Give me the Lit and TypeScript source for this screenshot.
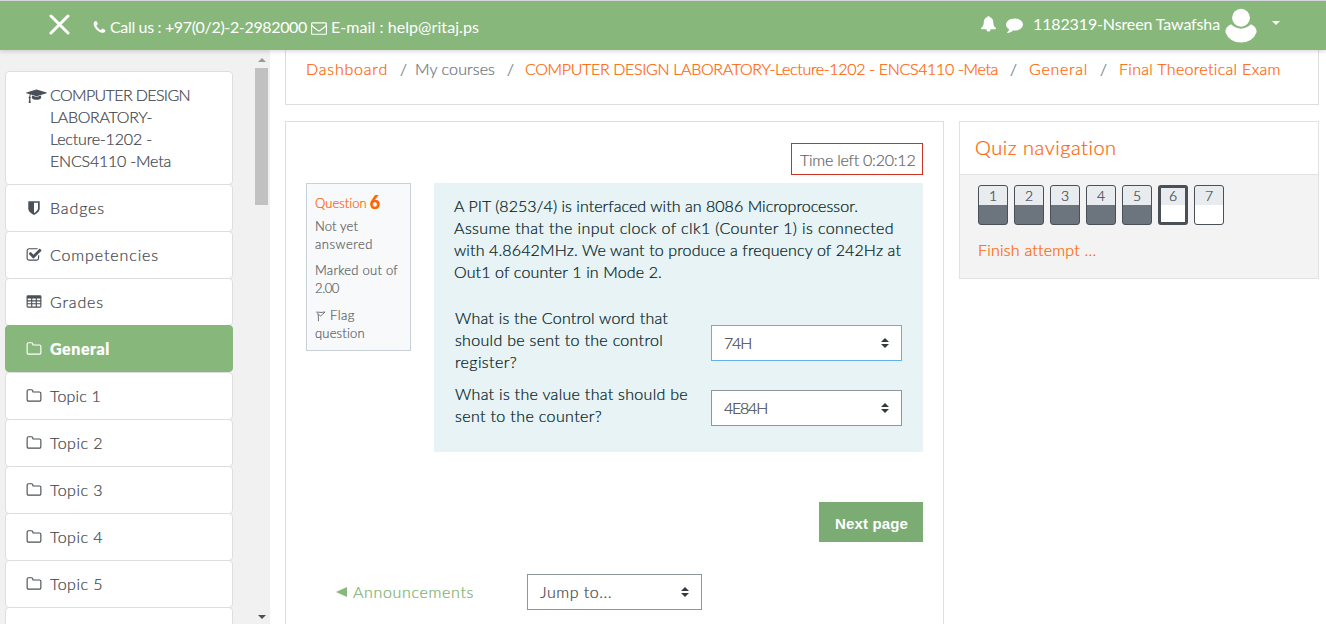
import { LitElement, html, svg, css } from "lit";
import { customElement, property, query } from "lit/decorators.js";

const icons: Record<string, any> = {
  phone: svg`<path d="M1600 1240q0 27-10 70.5t-21 68.5q-21 50-122 106-94 51-186 51-27 0-53-3.500t-57.500-12.500-47-14.500-55.500-20.500-49-18q-98-35-175-83-127-79-264-216t-216-264q-48-77-83-175-3-9-18-49t-20.500-55.500-14.500-47-12.500-57.500-3.500-53q0-92 51-186 56-101 106-122 25-11 68.500-21t70.500-10q14 0 21 3 18 6 53 76 11 19 30 54t35 63.500 31 53.500q3 4 17.500 25t21.500 35.500 7 28.500q0 20-28.500 50t-62 55-62 53-28.500 46q0 9 5 22.500t8.500 20.500 14 24 11.500 19q76 137 174 235t235 174q2 1 19 11.500t24 14 20.500 8.500 22.500 5q18 0 46-28.500t53-62 55-62 50-28.500q14 0 28.500 7t35.500 21.500 25 17.500q25 15 53.500 31t63.500 35 54 30q70 35 76 53 3 7 3 21z"/>`,
  envelope: svg`<path d="M1664 1504v-768q-32 36-69 66-268 206-426 338-51 43-83 67t-86.500 48.500-102.500 24.500h-2q-48 0-102.500-24.500t-86.500-48.500-83-67q-158-132-426-338-37-30-69-66v768q0 13 9.500 22.500t22.500 9.500h1472q13 0 22.500-9.500t9.500-22.500zm0-1051v-24.500l-.5-13-3-12.500-5.500-9-9-7.500-14-2.500h-1472q-13 0-22.500 9.500t-9.500 22.500q0 168 147 284 193 152 401 317 6 5 35 29.500t46 37.500 44.500 31.500 50.500 27.500 43 9h2q20 0 43-9t50.500-27.500 44.500-31.500 46-37.500 35-29.500q208-165 401-317 54-43 100.500-115.500t46.500-131.500zm128-37v1088q0 66-47 113t-113 47h-1472q-66 0-113-47t-47-113v-1088q0-66 47-113t113-47h1472q66 0 113 47t47 113z"/>`,
  bell: svg`<path d="M896 60q64 0 100 40t24 92q190 42 284 176t92 320q0 240 70 390t222 250q0 54-38 92t-90 38H1120q0 100-66 166t-158 66-158-66-66-166H232q-52 0-90-38t-38-92q152-100 222-250t70-390q-2-186 92-320t284-176q-12-52 24-92t100-40z"/>`,
  comment: svg`<path d="M1792 896q0 174-120 321.500t-326 233-450 85.500q-70 0-145-8-198 175-460 242-49 14-114 22-17 2-30.500-9t-17.500-29v-1q-3-4-.5-12t2-10 4.500-9.500l6-9 7-8.500 8-9q7-8 31-34.500t34.500-38 31-39.500 32.500-51 27-59 26-76q-157-89-247.500-220t-90.500-281q0-130 71-248.500t191-204.500 286-136.500 348-50.500q244 0 450 85.500t326 233 120 321.500z"/>`,
  check: svg`<path d="M1472 930v318q0 119-84.500 203.500t-203.500 84.500h-832q-119 0-203.500-84.500t-84.500-203.500v-832q0-119 84.500-203.500t203.500-84.500h832q63 0 117 25 15 7 18 23 3 17-9 29l-49 49q-10 10-23 10-3 0-9-2-23-6-45-6h-832q-66 0-113 47t-47 113v832q0 66 47 113t113 47h832q66 0 113-47t47-113v-254q0-13 9-22l64-64q10-10 23-10 6 0 12 3 20 8 20 29zm231-489l-814 814q-24 24-57 24t-57-24l-430-430q-24-24-24-57t24-57l110-110q24-24 57-24t57 24l263 263 647-647q24-24 57-24t57 24l110 110q24 24 24 57t-24 57z"/>`,
  folder: svg`<path d="M1600 1312v-704q0-40-28-68t-68-28h-704q-40 0-68-28t-28-68v-64q0-40-28-68t-68-28h-320q-40 0-68 28t-28 68v960q0 40 28 68t68 28h1216q40 0 68-28t28-68zm128-704v704q0 92-66 158t-158 66h-1216q-92 0-158-66t-66-158v-960q0-92 66-158t158-66h320q92 0 158 66t66 158v32h672q92 0 158 66t66 158z"/>`,
  shield: svg`<path d="M1344 960v-640h-448v1137q119-63 213-137 235-184 235-360zm192-768v768q0 86-33.500 170.500t-83 150-118 127.500-126.500 103-121 77.500-89.500 49.500-42.500 20q-12 6-26 6t-26-6q-16-7-42.500-20t-89.500-49.500-121-77.500-126.500-103-118-127.500-83-150-33.500-170.500v-768q0-26 19-45t45-19h1152q26 0 45 19t19 45z"/>`,
  table: svg`<path fill-rule="evenodd" d="M224 128H1568a160 160 0 0 1 160 160V1376a160 160 0 0 1-160 160H224a160 160 0 0 1-160-160V288A160 160 0 0 1 224 128zM192 512V704H576V512zM704 512V704H1088V512zM1216 512V704H1600V512zM192 832V1024H576V832zM704 832V1024H1088V832zM1216 832V1024H1600V832zM192 1152V1408H576V1152zM704 1152V1408H1088V1152zM1216 1152V1408H1600V1152z"/>`,
  cap: svg`<path d="M1580 830l14 270c5 150-300 250-570 250s-575-100-570-250l14-270 490 150q66 20 132 0zM2280 512q0 24-22 31L1040 925q-16 5-32 0L350 715q-80 60-95 235 78 45 78 138 0 88-72 134l64 482q3 15-8 26t-24 11H101q-14 0-24-11t-8-26l64-482q-72-46-72-134 0-93 80-140 12-170 78-276L-210 543q-22-7-22-31t22-31L1008 99q16-5 32 0l1218 382q22 7 22 31z"/>`,
  flag: svg`<path fill="none" stroke="currentColor" stroke-width="130" d="M200 250Q480 400 500 900L520 1680M350 300Q850 450 1500 290L850 900Q650 720 480 700"/>`,
  user: svg`<circle cx="896" cy="470" r="490"/><path d="M350 830Q896 1310 1442 830Q1760 980 1750 1260Q1550 1800 896 1830Q242 1800 42 1260Q32 980 350 830z"/>`,
};

const icon = (name: string) =>
  html`<svg class="ico ${name}" viewBox=${name === "cap" ? "-256 -64 2560 1792" : name === "user" ? "0 -64 1792 1920" : "0 0 1792 1792"}>${icons[name]}</svg>`;

/* One line of text whose tracking is adjusted so that it fills a given measure. */
@customElement("tracked-line")
class TrackedLine extends LitElement {
  @property() text = "";
  @property({ type: Number }) measure = 0;
  @query(".line") line!: HTMLSpanElement;

  static styles = css`
    :host { display: inline-block; white-space: pre; flex: none; }
    .line { display: inline-block; }
  `;

  updated() {
    const fit = () => {
      this.line.style.letterSpacing = "0px";
      const natural = this.line.getBoundingClientRect().width;
      const gap = (this.measure - natural) / this.text.length;
      this.line.style.letterSpacing = `${gap}px`;
    };
    fit();
    document.fonts.ready.then(fit);
  }

  render() {
    return html`<span class="line">${this.text}</span>`;
  }
}

const t = (text: string, measure: number, cls = "") =>
  html`<tracked-line class=${cls} .text=${text} .measure=${measure}></tracked-line>`;

@customElement("app-root")
class AppRoot extends LitElement {
  static styles = css`
    :host {
      display: flex; flex-direction: column; height: 624px; overflow: hidden; background: #fff;
      font: 300 16px/22px Lato, "Open Sans", sans-serif; color: #3f464c; -webkit-text-stroke: 0.22px;
    }
    * { box-sizing: border-box; }
    .ico { display: block; width: 16px; height: 16px; fill: currentColor; flex: none; overflow: visible; }
    .bar {
      height: 50px; flex: none; background: #88b77b; border-top: 1px solid #d5d7dc; color: #fff;
      display: flex; align-items: center; padding: 3px 46px 0 49px; z-index: 1; font-weight: 400;
      box-shadow: 0 2px 4px rgba(0,0,0,.13); -webkit-text-stroke: 0;
    }
    .close { width: 21px; height: 21px; margin: -5px 22px 0 0; stroke: #fff; stroke-width: 3; stroke-linecap: round; flex: none; }
    .phone { width: 15px; height: 15px; margin-right: 3px; }
    .envelope { margin: 1px 4px 0 4px; }
    .spacer { flex: 1; }
    .user-side { display: flex; align-items: center; margin-top: -6px; }
    .bell { width: 17px; height: 18px; margin-right: 9px; }
    .comment { width: 17px; height: 17px; margin-right: 10px; }
    .user { width: 34px; height: 35px; margin: 3px 14px 0 4px; }
    .caret { border: 4.500px solid transparent; border-top-color: #fff; border-bottom: 0; margin-top: -2px; }
    .body { display: flex; flex: 1; min-height: 0; }
    .side { width: 270px; flex: none; background: #f1f1f1; display: flex; justify-content: space-between; overflow: hidden; }
    .list { width: 228px; margin: 21px 0 0 5px; }
    .item {
      height: 48px; margin-bottom: -1px; padding: 0 0 0 20px; background: #fff; border: 1px solid #dedede;
      border-radius: 4px; display: flex; align-items: center; position: relative;
    }
    .item .ico { margin-right: 8px; color: #495057; }
    .item.course { height: 114px; align-items: flex-start; padding-top: 12px; }
    .item.course .cap { width: 21px; height: 15px; margin: 4px 3px 0 0; }
    .lines { display: flex; flex-direction: column; }
    .item.active { background: #88b77b; border-color: #88b77b; color: #fff; font-weight: 900; z-index: 1; height: 47px; margin-bottom: 0; padding-top: 1px; }
    .item.active .ico { color: #fff; }
    .scroll { width: 16px; display: flex; flex-direction: column; align-items: center; padding: 8px 2px 5px 1px; background: #f1f1f1; }
    .up { border: 4px solid transparent; border-bottom-color: #9a9a9a; border-top: 0; }
    .thumb { width: 13px; height: 137px; background: #c1c1c1; margin-top: 6px; flex: none; }
    .down { margin-top: auto; border: 4px solid transparent; border-top-color: #505050; border-bottom: 0; }
    .main { width: 1034px; margin-left: 15px; }
    .crumbs {
      height: 55px; border: 1px solid #dedede; border-top: 0; padding: 8px 0 0 20px;
      display: flex; align-items: flex-start; color: #6c757d;
    }
    .link { color: #ff6200; }
    .cols { display: flex; gap: 15px; margin-top: 16px; align-items: flex-start; }
    .quiz { width: 659px; height: 520px; border: 1px solid #dedede; padding: 21px 20px 0; }
    .timer { width: 132px; height: 32px; border: 1px solid #ca3120; margin-left: auto; padding: 5px 0 0 8px; color: #64676a; }
    .question { display: flex; justify-content: space-between; margin-top: 8px; align-items: flex-start; }
    .info {
      width: 105px; height: 168px; border: 1px solid #cad0d7; background: #f8f9fa; padding: 10px 0 0 8px;
      font-size: 13px; line-height: 18px; color: #5d6368; display: flex; flex-direction: column;
    }
    .row { display: flex; }
    .no { font-size: 18px; font-weight: 900; margin: -1px 0 0 3px; }
    .state { margin-top: 5px; display: flex; flex-direction: column; }
    .gap { margin-top: 8px; display: flex; flex-direction: column; }
    .info .flag { width: 12px; height: 12px; margin: 4px 3px 0 0; }
    .gap.mark { margin-top: 9px; }
    .form { width: 489px; height: 269px; background: #e7f3f5; padding: 12px 21px 0 20px; color: #001a1e; }
    .answers { display: grid; grid-template-columns: 1fr 191px; margin: 24px 0 0 1px; row-gap: 10px; }
    .select {
      height: 36px; border: 1px solid #8f959e; background: #fff; color: #3f464c; padding: 0 12px;
      display: flex; align-items: center; justify-content: space-between;
    }
    .select.one { border-color: #66afe9; margin-top: 18px; }
    .select.two { margin-top: 7px; }
    .arrows { width: 8px; height: 10px; fill: #343a40; }
    .next {
      display: flex; align-items: center; width: 104px; height: 40px; margin: 50px 0 0 auto; padding: 4px 0 0 16px;
      background: #7aac74; color: #fff; font: bold 15px/22px "Liberation Sans", sans-serif; -webkit-text-stroke: 0;
    }
    .nav { display: flex; align-items: center; margin: 32px 0 0 30px; color: #7aaf6c; }
    .prev { width: 11px; height: 10px; fill: #88b77b; margin-right: 6px; }
    .nav .select { width: 175px; margin-left: 53px; }
    .block { width: 360px; height: 158px; border: 1px solid #e2e2e2; background: #f3f3f3; }
    .head { height: 53px; background: #fff; border-bottom: 1px solid #e2e2e2; font-size: 20px; padding: 14px 0 0 15px; }
    .cells { display: flex; gap: 6px; padding: 10px 0 0 18px; }
    .cell {
      width: 30px; height: 40px; border: 1px solid #495057; border-radius: 3px; font-size: 14px; line-height: 19px;
      text-align: center; background: linear-gradient(#e9ecef 19px, #6c757d 19px);
    }
    .cell.open { background: linear-gradient(#e9ecef 19px, #fff 19px); }
    .cell.here { border-width: 3px; line-height: 15px; background: linear-gradient(#e9ecef 17px, #fff 17px); }
    .finish { padding: 14px 0 0 18px; }
  `;

  private select(text: string, w: number, cls = "") {
    return html`<div class="select ${cls}">${t(text, w)}<svg class="arrows" viewBox="0 0 8 10"><path d="M0 4L4 0l4 4zM0 6l4 4 4-4z"/></svg></div>`;
  }

  private sep(before: number, after: number) {
    return html`<span style="width:${before + after + 6}px;padding-left:${before}px">/</span>`;
  }

  render() {
    const items: [string, string, number][] = [
      ["shield", "Badges", 55], ["check", "Competencies", 109], ["table", "Grades", 54], ["folder", "General", 60],
      ["folder", "Topic 1", 51], ["folder", "Topic 2", 53], ["folder", "Topic 3", 53], ["folder", "Topic 4", 53],
      ["folder", "Topic 5", 53],
    ];
    return html`
      <div class="bar">
        <svg class="close" viewBox="0 0 21 21"><path d="M2 2l17 17M19 2L2 19"/></svg>
        ${icon("phone")}${t("Call us : +97(0/2)-2-2982000", 197)}${icon("envelope")}${t("E-mail : help@ritaj.ps", 148)}
        <span class="spacer"></span>
        <div class="user-side">
          ${icon("bell")}${icon("comment")}${t("1182319-Nsreen Tawafsha", 187)}${icon("user")}<span class="caret"></span>
        </div>
      </div>
      <div class="body">
        <div class="side">
          <div class="list">
            <div class="item course">${icon("cap")}
              <div class="lines">${t("COMPUTER DESIGN", 140)}${t("LABORATORY-", 102)}${t("Lecture-1202 -", 102)}${t("ENCS4110 -Meta", 121)}</div>
            </div>
            ${items.map(([i, text, w]) => html`<div class="item ${text === "General" ? "active" : ""}">${icon(i)}${t(text, w)}</div>`)}
            <div class="item"></div>
          </div>
          <div class="scroll"><span class="up"></span><span class="thumb"></span><span class="down"></span></div>
        </div>
        <div class="main">
          <div class="crumbs">
            ${t("Dashboard", 82, "link")}${this.sep(12, 9)}${t("My courses", 80)}${this.sep(12, 12)}
            ${t("COMPUTER DESIGN LABORATORY-Lecture-1202 - ENCS4110 -Meta", 473, "link")}${this.sep(12, 13)}
            ${t("General", 59, "link")}${this.sep(12, 13)}${t("Final Theoretical Exam", 162, "link")}
          </div>
          <div class="cols">
            <div class="quiz">
              <div class="timer">${t("Time left 0:20:12", 115)}</div>
              <div class="question">
                <div class="info">
                  <div class="row link">${t("Question", 52)}<span class="no">6</span></div>
                  <div class="state">${t("Not yet", 43)}${t("answered", 58)}</div>
                  <div class="gap">${t("Marked out of", 83)}${t("2.00", 24)}</div>
                  <div class="gap mark"><div class="row">${icon("flag")}${t("Flag", 25)}</div>${t("question", 50)}</div>
                </div>
                <div class="form">
                  <div class="lines">
                    ${t("A PIT (8253/4) is interfaced with an 8086 Microprocessor.", 404)}
                    ${t("Assume that the input clock of clk1 (Counter 1) is connected", 440)}
                    ${t("with 4.8642MHz. We want to produce a frequency of 242Hz at", 447)}
                    ${t("Out1 of counter 1 in Mode 2.", 208)}
                  </div>
                  <div class="answers">
                    <div class="lines">${t("What is the Control word that", 213)}${t("should be sent to the control", 208)}${t("register?", 62)}</div>
                    ${this.select("74H", 27, "one")}
                    <div class="lines">${t("What is the value that should be", 233)}${t("sent to the counter?", 147)}</div>
                    ${this.select("4E84H", 43, "two")}
                  </div>
                </div>
              </div>
              <div class="next">${t("Next page", 73)}</div>
              <div class="nav">
                <svg class="prev" viewBox="0 0 11 10"><path d="M0 5L11 0v10z"/></svg>${t("Announcements", 121)}
                ${this.select("Jump to...", 72)}
              </div>
            </div>
            <div class="block">
              <div class="head link">${t("Quiz navigation", 142)}</div>
              <div class="cells">
                ${[1, 2, 3, 4, 5, 6, 7].map((n) => html`<div class="cell ${n > 5 ? "open" : ""} ${n === 6 ? "here" : ""}">${n}</div>`)}
              </div>
              <div class="finish link">${t("Finish attempt ...", 118)}</div>
            </div>
          </div>
        </div>
      </div>
    `;
  }
}
